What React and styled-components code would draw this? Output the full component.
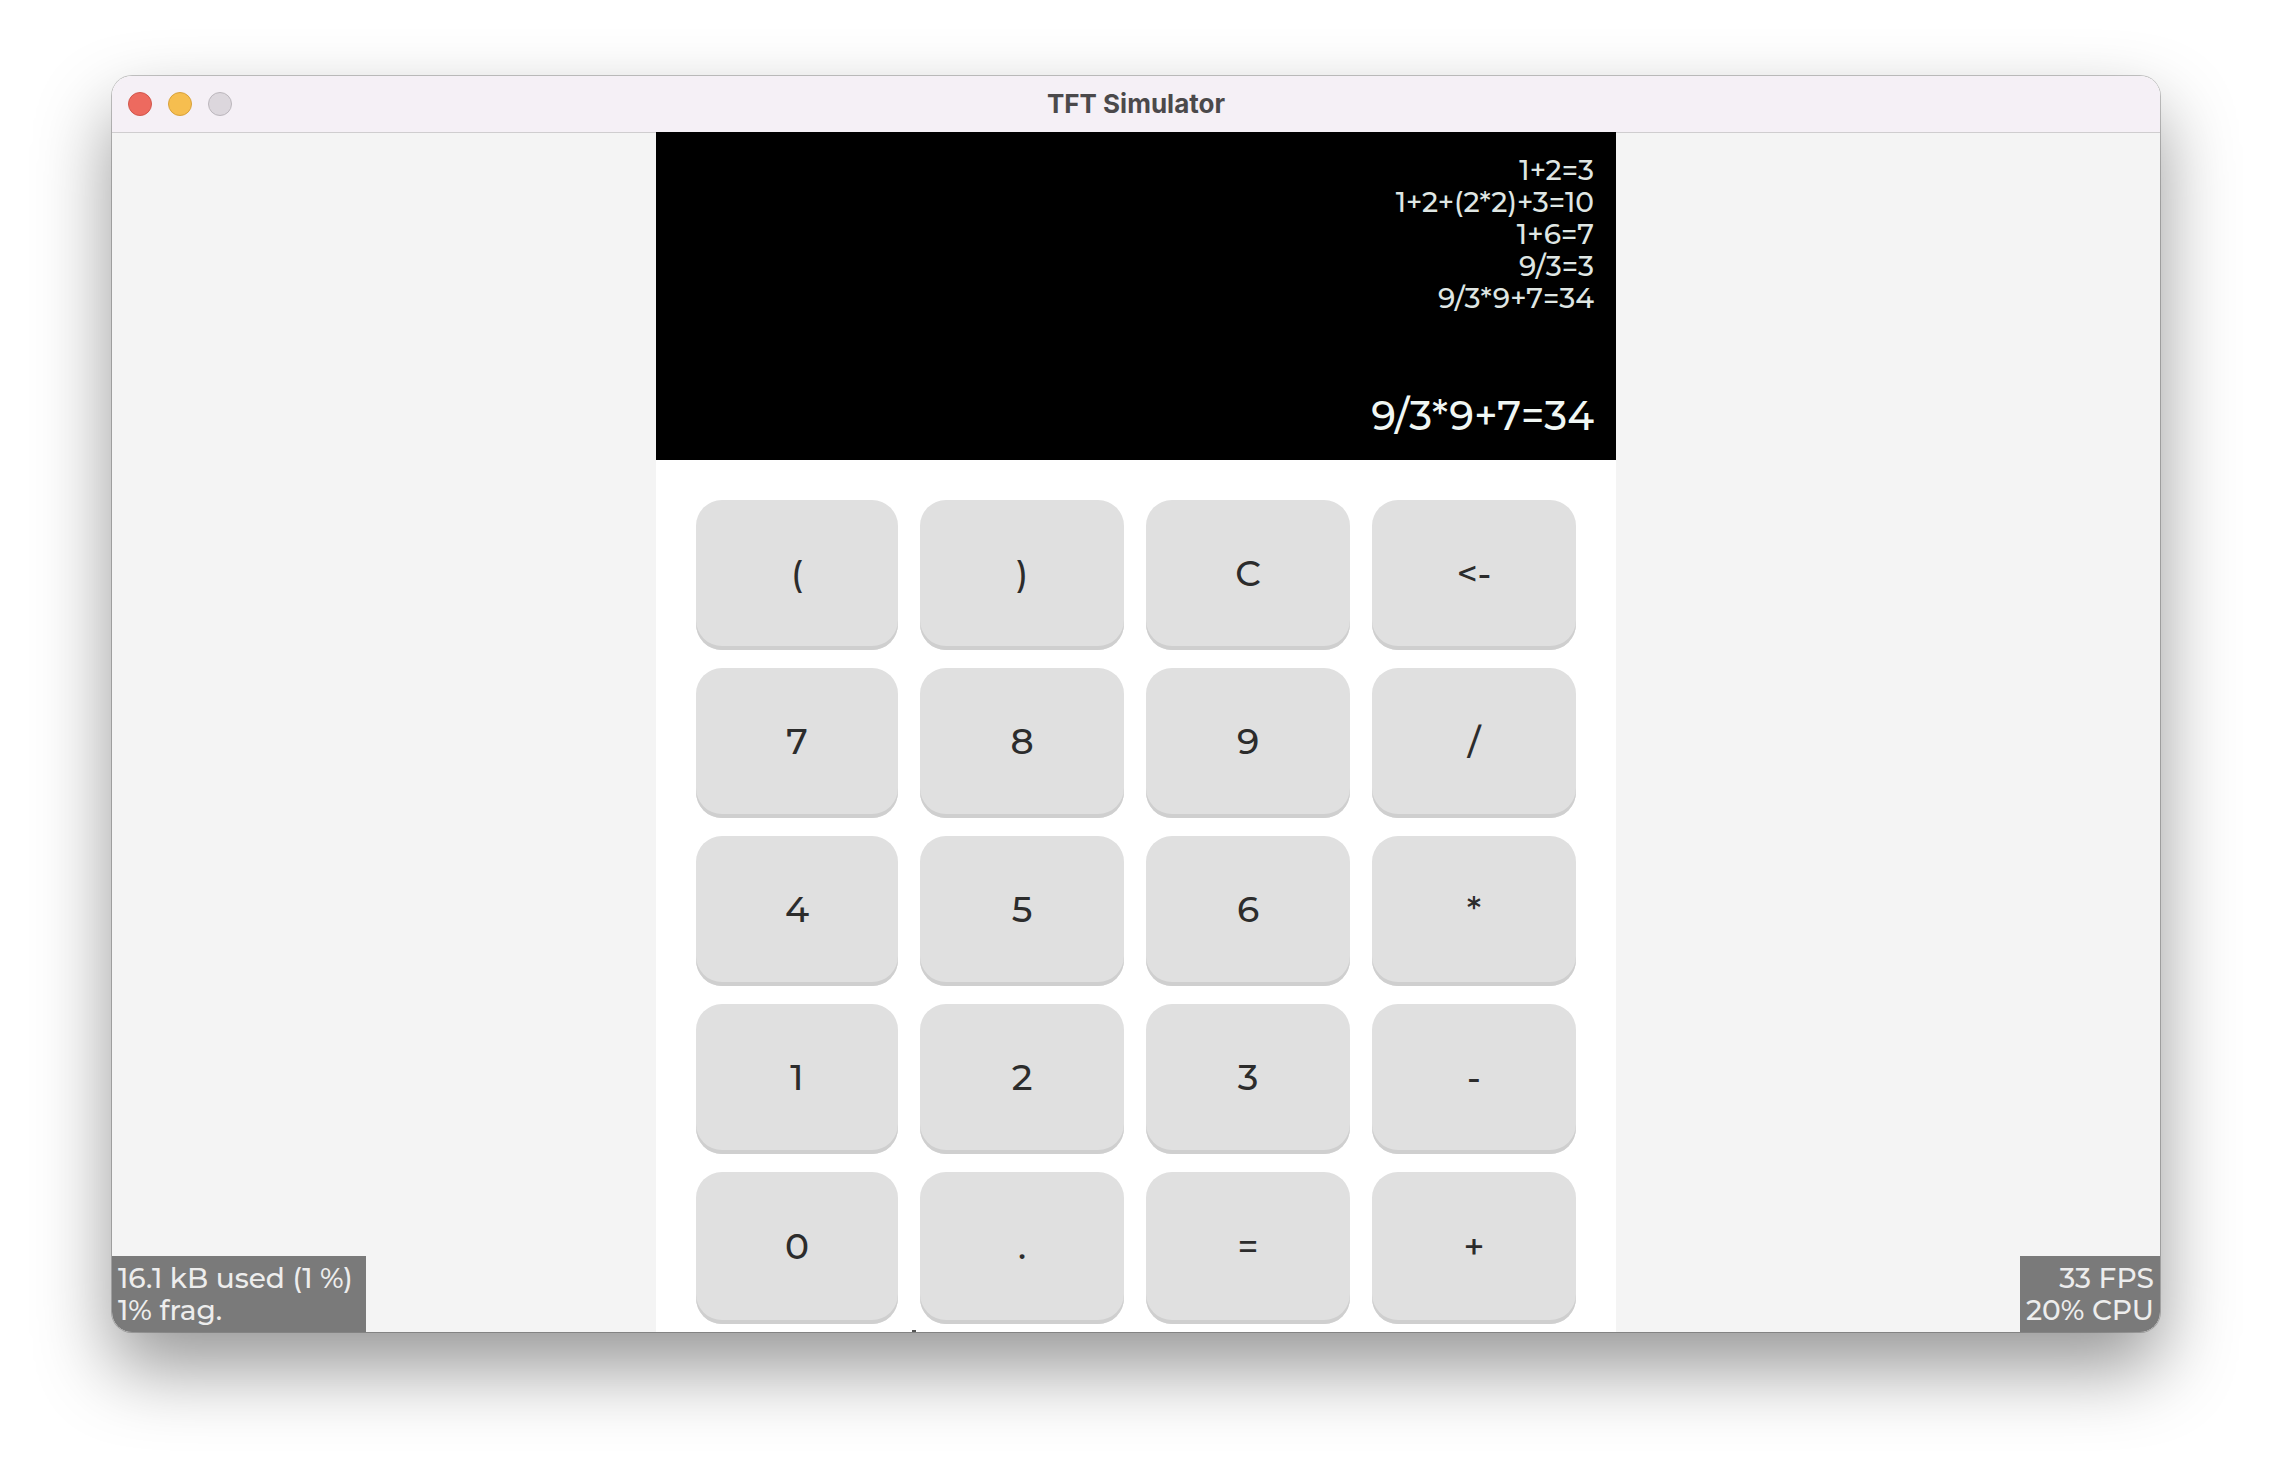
import React, { useState } from 'react';
import styled, { createGlobalStyle } from 'styled-components';

const GlobalStyle = createGlobalStyle`
  *, *::before, *::after { box-sizing: border-box; }
  body {
    margin: 0;
    background: #ffffff;
    font-family: 'Montserrat', 'Open Sans', 'Noto Sans', sans-serif;
  }
`;

const Desktop = styled.main`
  min-height: 100vh;
  padding: 76px 112px 148px;
  overflow: hidden;
`;

const AppWindow = styled.section`
  position: relative;
  overflow: hidden;
  border-radius: 20px;
  background: #f4f4f4;
`;

const WindowShadow = styled.div`
  border-radius: 20px;
  box-shadow: 0 0 0 1px rgba(0, 0, 0, 0.22), 0 36px 76px rgba(0, 0, 0, 0.41);
`;

const TitleBar = styled.header`
  display: grid;
  grid-template-columns: 1fr auto 1fr;
  align-items: center;
  height: 56px;
  padding: 0 16px;
  background: #f5f0f6;
`;

const WindowControls = styled.div`
  display: flex;
  gap: 16px;
`;

const ControlDot = styled.button`
  width: 24px;
  height: 24px;
  padding: 0;
  border: 1px solid ${(p) => p.$edge};
  border-radius: 50%;
  background: ${(p) => p.$fill};
`;

const Title = styled.h1`
  margin: 0;
  color: #4b494b;
  font: 700 26px/32px Inter, 'Liberation Sans', sans-serif;
`;

const Stage = styled.div`
  background: linear-gradient(#cfcdcf, #cfcdcf) top / 100% 1px no-repeat;
`;

const Screen = styled.div`
  max-width: 960px;
  margin: 0 auto;
  background: #ffffff;
`;

const Display = styled.div`
  display: flex;
  flex-direction: column;
  justify-content: space-between;
  min-height: 328px;
  padding: 22px 22px 20px;
  background: #000000;
  text-align: right;
`;

const History = styled.ol`
  margin: 0;
  padding: 0;
  list-style: none;
  color: #dfe6e3;
  font-size: 28px;
  font-weight: 500;
  line-height: 32px;
`;

const Result = styled.output`
  color: #f0f7f4;
  font-size: 40px;
  font-weight: 500;
  line-height: 48px;
`;

const Keypad = styled.div`
  display: grid;
  grid-template-columns: 202fr 204fr 204fr 204fr;
  grid-template-rows: repeat(4, 150px) 152px;
  gap: 18px 22px;
  padding: 40px 40px 6px;
`;

const Key = styled.button`
  padding: 0 0 4px;
  border: 0;
  border-radius: 26px;
  background: #e0e0e0;
  box-shadow: inset 0 -4px 0 #cfcfcf;
  color: #2c2c2c;
  font-family: inherit;
  font-size: 36px;
  font-weight: 500;
  line-height: 40px;
`;

const Caret = styled.div`
  width: 4px;
  height: 2px;
  margin-left: 256px;
  background: #555555;
`;

const Monitor = styled.aside`
  position: absolute;
  bottom: 0;
  ${(p) => p.$side}: 0;
  min-width: ${(p) => p.$minWidth};
  padding: 6px;
  background: #7a7a7a;
  color: #ededed;
  font-size: 28px;
  font-weight: 500;
  line-height: 32px;
  text-align: ${(p) => p.$side};
  white-space: nowrap;
`;

const MonitorLine = styled.div``;

const CONTROLS = [
  { label: 'Close', fill: '#ed6a5f', edge: '#d1564c' },
  { label: 'Minimize', fill: '#f6be4f', edge: '#d8a13b' },
  { label: 'Zoom', fill: '#dcd7dd', edge: '#bbb6bc' },
];

const KEYS = ['(', ')', 'C', '<-', '7', '8', '9', '/', '4', '5', '6', '*', '1', '2', '3', '-', '0', '.', '=', '+'];

const PAST = ['1+2=3', '1+2+(2*2)+3=10', '1+6=7', '9/3=3', '9/3*9+7=34'];

export default function App() {
  const [entry, setEntry] = useState('9/3*9+7=34');

  const press = (key) => {
    if (key === 'C') setEntry('');
    else if (key === '<-') setEntry((text) => text.slice(0, -1));
    else if (key !== '=') setEntry((text) => (text.includes('=') ? key : text + key));
  };

  return (
    <>
      <GlobalStyle />
      <Desktop>
        <WindowShadow>
          <AppWindow>
            <TitleBar>
              <WindowControls>
                {CONTROLS.map((c) => (
                  <ControlDot key={c.label} type="button" aria-label={c.label} $fill={c.fill} $edge={c.edge} />
                ))}
              </WindowControls>
              <Title>TFT Simulator</Title>
            </TitleBar>
            <Stage>
              <Screen>
                <Display>
                  <History>
                    {PAST.map((line) => (
                      <li key={line}>{line}</li>
                    ))}
                  </History>
                  <Result>{entry}</Result>
                </Display>
                <Keypad>
                  {KEYS.map((key) => (
                    <Key key={key} type="button" onClick={() => press(key)}>
                      {key}
                    </Key>
                  ))}
                </Keypad>
                <Caret />
              </Screen>
            </Stage>
            <Monitor $side="left" $minWidth="254px">
              <MonitorLine>16.1 kB used (1 %)</MonitorLine>
              <MonitorLine>1% frag.</MonitorLine>
            </Monitor>
            <Monitor $side="right" $minWidth="140px">
              <MonitorLine>33 FPS</MonitorLine>
              <MonitorLine>20% CPU</MonitorLine>
            </Monitor>
          </AppWindow>
        </WindowShadow>
      </Desktop>
    </>
  );
}
